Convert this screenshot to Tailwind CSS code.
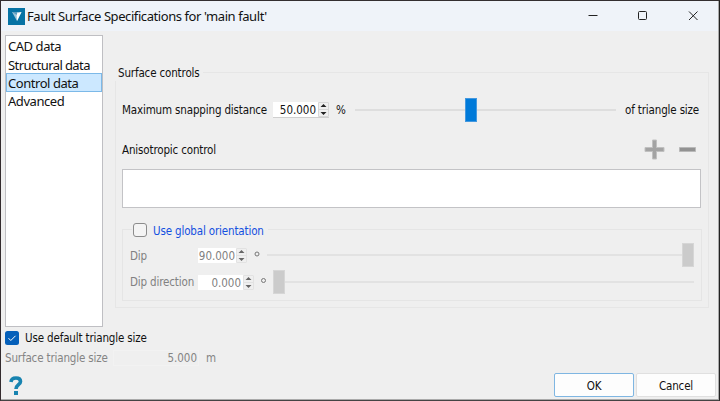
<!DOCTYPE html>
<html lang="en">

<head>
    <meta charset="UTF-8">
    <meta name="viewport" content="width=device-width, initial-scale=1.0">
    <title>Fault Surface Specifications</title>
    <script src="https://cdn.jsdelivr.net/npm/@tailwindcss/browser@4"></script>
</head>

<body class="h-[401px] w-[720px] overflow-hidden bg-[#efefef] font-['DejaVu_Sans_Condensed','Noto_Sans',sans-serif] text-[11.5px] leading-4 tracking-[-0.15px] whitespace-nowrap text-[#111]">
    <div class="flex h-full flex-col border border-t-[#332e30] border-r-[#222] border-b-[#444] border-l-[#332b2e]">
        <!-- Title bar -->
        <header class="flex h-[30px] shrink-0 items-center border-r border-[#aaa] bg-[#eff3f9] pl-[7px]">
            <svg class="h-[17px] w-[17px]" viewBox="0 0 17 17">
                <rect width="17" height="17" fill="#0673a5" />
                <path d="M4 4h9.500L9 13z" fill="#9cc4d8" />
                <path d="M8.500 5.500l5-1.500L9 13z" fill="#fff" />
                <path d="M4 4h5v3z" fill="#5b9cbe" />
            </svg>
            <h1 class="ml-0.5 font-['Noto_Sans',sans-serif] text-[13px] tracking-[-0.42px]">Fault Surface Specifications for 'main fault'</h1>
            <div class="ml-auto flex items-center">
                <svg class="h-[30px] w-[50px]" viewBox="0 0 50 30" fill="none" stroke="#222">
                    <path d="M20.5 14.5h9" />
                </svg>
                <svg class="h-[30px] w-[50px]" viewBox="0 0 50 30" fill="none" stroke="#222">
                    <rect x="20.5" y="10.5" width="8" height="8" rx="1" />
                </svg>
                <svg class="h-[30px] w-[50px]" viewBox="0 0 50 30" fill="none" stroke="#222">
                    <path d="M21 10.5l8.5 8.5M29.5 10.5l-8.5 8.5" />
                </svg>
            </div>
        </header>

        <div class="flex border-r border-[#aaa] pt-1 pl-1">
            <!-- Sections -->
            <ul class="h-[292px] w-[98px] shrink-0 border border-[#bfbfc3] bg-white pt-px font-['Noto_Sans',sans-serif] text-[13px] tracking-[-0.45px]">
                <li class="h-[18px] pl-[2px] leading-[19px] tracking-[-0.45px]">CAD data</li>
                <li class="h-[18px] pl-[2px] leading-[20px] tracking-[-0.58px]">Structural data</li>
                <li class="h-[19px] border border-[#7cb9e8] bg-[#cce8ff] pl-px leading-[18px]">Control data</li>
                <li class="h-[18px] pl-[2px] leading-[18px]">Advanced</li>
            </ul>

            <!-- Surface controls -->
            <section class="mt-[37px] ml-3 h-[236px] w-[594px] shrink-0 border border-[#e6e6e6] px-[6px]">
                <h2 class="-mt-[8px] -ml-[7px] h-4 w-[88px] bg-[#efefef] pl-[3px]">Surface controls</h2>

                <div class="mt-[17px] flex h-6 items-center">
                    <span class="w-[151px] shrink-0">Maximum snapping distance</span>
                    <div class="flex h-4 w-14 shrink-0 border-b border-[#cfcfcf] bg-white">
                        <span class="flex-1 pr-0.5 text-right leading-4 tracking-normal">50.000</span>
                        <svg class="h-[15px] w-[11px]" viewBox="0 0 11 15">
                            <path d="M.5.5h10v14H.5zM0 7.5h11" fill="#efefef" stroke="#d6d6d6" />
                            <path d="M2.5 5l3-3 3 3zM2.5 10h6l-3 3z" fill="#222" />
                        </svg>
                    </div>
                    <span class="ml-[7px] w-[19px] shrink-0">%</span>
                    <div class="relative h-6 w-[261px] shrink-0">
                        <div class="mt-[11px] h-[2px] bg-[#dedede]"></div>
                        <div class="absolute top-0 left-[110px] h-6 w-3 border border-[#4398df] bg-[#007ad9]"></div>
                    </div>
                    <span class="ml-[9px]">of triangle size</span>
                </div>

                <div class="mt-[16px] flex h-[22px] items-center">
                    <span class="pt-px">Anisotropic control</span>
                    <svg class="mr-[4px] ml-auto h-[21px] w-[54px]" viewBox="0 0 54 21">
                        <path d="M8.500 1h4v7.500h7.500v4h-7.500V20h-4v-7.500H1v-4h7.500z" fill="#a3a3a3" stroke="#c0c0c0" />
                        <path d="M35.500 8.500h16v4h-16z" fill="#929292" stroke="#b8b8b8" />
                    </svg>
                </div>

                <div class="mt-[9px] h-[39px] w-[579px] border border-[#c3c3c6] bg-white"></div>

                <!-- Global orientation -->
                <div class="mt-[21px] h-[72px] w-[580px] border border-[#e5e5e5] pl-[7px] text-[#818181]">
                    <label class="-mt-[8px] ml-[2px] flex h-4 w-[136px] items-center bg-[#efefef] pl-px text-[#1450e0]">
                        <span class="h-[14px] w-[14px] shrink-0 rounded-[3px] border border-[#8c8c8c] bg-[#f4f4f4]"></span>
                        <span class="ml-[6px] pt-px">Use global orientation</span>
                    </label>
                    <div class="mt-[5px] flex h-6 items-center">
                        <span class="w-[68px] shrink-0 pt-px">Dip</span>
                        <div class="flex h-[15px] w-[49px] shrink-0 bg-white">
                            <span class="flex-1 text-right leading-4 tracking-normal">90.000</span>
                            <svg class="ml-px h-[15px] w-[11px]" viewBox="0 0 11 15">
                                <path d="M.5.5h10v14H.5zM0 7.5h11" fill="#efefef" stroke="#e2e2e2" />
                                <path d="M2.500 5l3-3 3 3zM2.500 10h6l-3 3z" fill="#666" />
                            </svg>
                        </div>
                        <svg class="ml-[7px] h-[15px] w-[13px]" viewBox="0 0 13 15" fill="none" stroke="#777">
                            <circle cx="3" cy="6" r="2" />
                        </svg>
                        <div class="relative h-6 w-[427px]">
                            <div class="mt-[11px] h-[2px] bg-[#e2e2e2]"></div>
                            <div class="absolute top-0 right-0 h-6 w-3 border border-[#d6d6d6] bg-[#cbcbcb]"></div>
                        </div>
                    </div>
                    <div class="mt-[3px] flex h-6 items-center">
                        <span class="w-[68px] shrink-0">Dip direction</span>
                        <div class="flex h-[15px] w-14 shrink-0 bg-white">
                            <span class="flex-1 pr-px text-right leading-4 tracking-normal">0.000</span>
                            <svg class="ml-px h-[15px] w-[11px]" viewBox="0 0 11 15">
                                <path d="M.5.5h10v14H.5zM0 7.5h11" fill="#efefef" stroke="#e2e2e2" />
                                <path d="M2.500 5l3-3 3 3zM2.500 10h6l-3 3z" fill="#666" />
                            </svg>
                        </div>
                        <svg class="ml-[6px] h-[15px] w-[13px]" viewBox="0 0 13 15" fill="none" stroke="#777">
                            <circle cx="3.500" cy="5.500" r="2" />
                        </svg>
                        <div class="relative h-6 w-[421px]">
                            <div class="mt-[11px] h-[2px] bg-[#e2e2e2]"></div>
                            <div class="absolute top-0 left-0 h-6 w-3 border border-[#d6d6d6] bg-[#cbcbcb]"></div>
                        </div>
                    </div>
                </div>
            </section>
        </div>

        <!-- Triangle size -->
        <div class="flex-1 border-r border-b border-[#aaa]">
            <label class="mt-[3px] ml-1 flex h-4 items-center">
                <svg class="h-[14px] w-[14px]" viewBox="0 0 14 14" fill="none">
                    <rect width="14" height="14" rx="2.500" fill="#0560ba" />
                    <path d="M3.500 7.200l2.300 2.300 4.700-4.700" stroke="#fff" />
                </svg>
                <span class="ml-[6px]">Use default triangle size</span>
            </label>
            <div class="mt-[4px] ml-1 flex h-4 items-center text-[#848484]">
                <span class="w-[108px]">Surface triangle size</span>
                <span class="w-[86px] border border-[#f2f2f2] pr-px text-right leading-[14px] tracking-normal">5.000</span>
                <span class="ml-[7px]">m</span>
            </div>

            <!-- Footer -->
            <footer class="mt-[7px] flex h-6 items-center pr-[2px] pl-2">
                <svg class="h-[19px] w-[14px]" viewBox="0 0 14 19" fill="none">
                    <path d="M2 6C2.200 3.200 4.500 2 7 2c3 0 4.500 1.400 4.500 3.500 0 3.300-4.500 3.200-4.500 7.500" stroke="#1783b0" stroke-width="3.600" />
                    <path d="M5 15h4v4H5z" fill="#1783b0" />
                </svg>
                <button class="ml-auto h-6 w-20 rounded-[2px] border border-[#7fb6e2] bg-[#fdfdfd] pt-px">OK</button>
                <button class="ml-[2px] h-6 w-20 rounded-[2px] border border-[#e0e0e0] bg-[#fdfdfd] pt-px">Cancel</button>
            </footer>
        </div>
    </div>
</body>

</html>
